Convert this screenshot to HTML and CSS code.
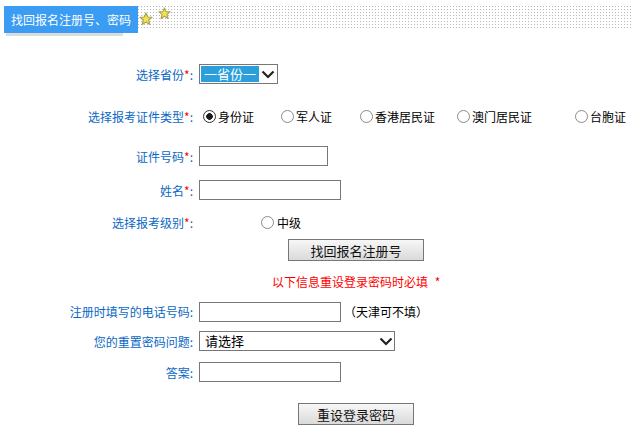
FILE: index.html
```html
<!DOCTYPE html>
<html lang="zh-CN">

<head>
    <meta charset="UTF-8">
    <meta name="viewport" content="width=device-width, initial-scale=1.0">
    <title>找回报名注册号、密码</title>

    <link rel="stylesheet" href="styles.css">
</head>

<body>
    <div class="title_bar">
        <div class="title_wrap">
            <div class="title">找回报名注册号、密码</div>
            <div class="title_shadow"></div>
        </div>
        <div class="dots">
            <svg class="star star1" width="14" height="14" viewBox="0 0 14 14">
                <polygon points="7,1 8.7,5 13,5.3 9.7,8 10.8,12.4 7,10 3.2,12.4 4.3,8 1,5.3 5.3,5" />
            </svg>
            <svg class="star star2" width="13" height="13" viewBox="0 0 14 14">
                <polygon points="7,1 8.7,5 13,5.3 9.7,8 10.8,12.4 7,10 3.2,12.4 4.3,8 1,5.3 5.3,5" />
            </svg>
        </div>
    </div>

    <form class="form">
        <div class="row r1">
            <label class="lbl">选择省份<em>*</em>:</label>
            <div class="field">
                <span class="select province">
                    <select>
                        <option>一省份一</option>
                    </select>
                    <svg class="chev" width="16" height="9" viewBox="0 0 16 9">
                        <polyline points="2.5,1.5 8,7 13.5,1.5" />
                    </svg>
                </span>
            </div>
        </div>

        <div class="row r2">
            <label class="lbl">选择报考证件类型<em>*</em>:</label>
            <div class="field">
                <span class="opt w1"><input type="radio" name="idtype" checked>身份证</span>
                <span class="opt w2"><input type="radio" name="idtype">军人证</span>
                <span class="opt w3"><input type="radio" name="idtype">香港居民证</span>
                <span class="opt w4"><input type="radio" name="idtype">澳门居民证</span>
                <span class="opt"><input type="radio" name="idtype">台胞证</span>
            </div>
        </div>

        <div class="row r3">
            <label class="lbl">证件号码<em>*</em>:</label>
            <div class="field"><input type="text" class="txt short"></div>
        </div>

        <div class="row r4">
            <label class="lbl">姓名<em>*</em>:</label>
            <div class="field"><input type="text" class="txt"></div>
        </div>

        <div class="row r5">
            <label class="lbl">选择报考级别<em>*</em>:</label>
            <div class="field">
                <span class="opt level"><input type="radio" name="level">中级</span>
            </div>
        </div>

        <div class="row r6">
            <span class="lbl"></span>
            <div class="field"><input type="button" class="btn btn_find" value="找回报名注册号"></div>
        </div>

        <div class="row r7">
            <span class="lbl"></span>
            <div class="field"><span class="notice">以下信息重设登录密码时必填 *</span></div>
        </div>

        <div class="row r8">
            <label class="lbl">注册时填写的电话号码:</label>
            <div class="field"><input type="text" class="txt"><span class="tip">（天津可不填）</span></div>
        </div>

        <div class="row r9">
            <label class="lbl">您的重置密码问题:</label>
            <div class="field">
                <span class="select question">
                    <select>
                        <option>请选择</option>
                    </select>
                    <svg class="chev" width="16" height="9" viewBox="0 0 16 9">
                        <polyline points="2.5,1.5 8,7 13.5,1.5" />
                    </svg>
                </span>
            </div>
        </div>

        <div class="row r10">
            <label class="lbl">答案:</label>
            <div class="field"><input type="text" class="txt"></div>
        </div>

        <div class="row r11">
            <span class="lbl"></span>
            <div class="field"><input type="button" class="btn btn_reset" value="重设登录密码"></div>
        </div>
    </form>
</body>

</html>
```

FILE: styles.css
```css
body {
    margin: 0;
    font-family: "Noto Sans CJK SC", "Liberation Sans", sans-serif;
    font-size: 12px;
    color: #000;
    background: #fff;
}

/* title bar */
.title_bar {
    display: flex;
    align-items: flex-start;
    margin: 6px 0 0 4px;
}

.title_wrap {
    flex: none;
    width: 134px;
}

.title {
    height: 27px;
    padding-left: 7px;

    background-color: #3a9cf2;
    color: #fff;
    font-size: 12px;
    line-height: 27px;
    white-space: nowrap;
}

.title_shadow {
    width: 117px;
    height: 3px;
    margin-left: 2px;
    background-color: #dcdcdc;
}

.dots {
    flex: 1;
    height: 22px;
    display: flex;
    align-items: flex-start;

    background-image: linear-gradient(to bottom, transparent 1px, #fff 1px),
        linear-gradient(to right, #b8b8b8 1px, #fff 1px);
    background-size: 3px 3px;
}

.star polygon {
    fill: #f2e44c;
    stroke: #a8a456;
    stroke-width: 1.2;
    stroke-linejoin: round;
}

.star1 {
    margin: 6px 0 0 1px;
}

.star2 {
    margin: 1px 0 0 5px;
}

/* form rows */
.form {
    margin-top: 16px;
}

.row {
    display: grid;
    grid-template-columns: 198px 1fr;
    align-items: center;
}

.r1 { height: 44px; }
.r2 { height: 41px; }
.r3 { height: 38px; }
.r4 { height: 30px; }
.r5 { height: 34px; }
.r6 { height: 22px; }
.r7 { height: 40px; }
.r8 { height: 21px; }
.r9 { height: 38px; }
.r10 { height: 24px; }
.r11 { height: 22px; margin-top: 19px; }

.lbl {
    text-align: right;
    padding-right: 5px;
    color: #0a68c4;
    white-space: nowrap;
}

.lbl em {
    font-style: normal;
    color: #f00;
}

.field {
    display: flex;
    align-items: center;
    white-space: nowrap;
}

/* inputs */
.txt {
    width: 142px;
    height: 20px;
    box-sizing: border-box;
    margin: 0 0 0 1px;
    border: 1px solid #777;
    padding: 0 3px;
    font: inherit;
}

.txt.short {
    width: 129px;
}

.tip {
    margin-left: 3px;
}

.select {
    display: inline-flex;
    align-items: center;
    height: 20px;
    box-sizing: border-box;
    margin-left: 1px;
    border: 1px solid #777;
    background: #fff;
}

.select select {
    appearance: none;
    -webkit-appearance: none;
    border: none;
    outline: none;
    height: 16px;
    padding: 0 3px;
    font: inherit;
    font-size: 13px;
    line-height: 16px;
}

.province {
    width: 79px;
}

.province select {
    width: 58px;
    margin-left: 1px;
    background-color: #2b9fdc;
    color: #fff;
}

.question {
    width: 196px;
}

.question select {
    flex: 1;
    background-color: #fff;
    color: #000;
    padding-left: 5px;
}

.chev {
    margin-left: 1px;
}

.chev polyline {
    fill: none;
    stroke: #222;
    stroke-width: 2.2;
}

/* radios */
.opt {
    display: inline-flex;
    align-items: center;
}

.w1 { width: 78px; }
.w2 { width: 79px; }
.w3 { width: 97px; }
.w4 { width: 118px; }

.opt input {
    appearance: none;
    -webkit-appearance: none;
    width: 13px;
    height: 13px;
    margin: 0 2px 0 5px;
    border: 1px solid #8a8a8a;
    border-radius: 50%;
    background: #fff;
}

.opt input:checked {
    border-color: #333;
    background: radial-gradient(circle, #1a1a1a 0 3px, #fff 3.6px);
}

.level input {
    margin-left: 63px;
    margin-right: 3px;
}

/* buttons */
.btn {
    height: 22px;
    box-sizing: border-box;
    border: 1px solid #777;
    background: linear-gradient(#f7f7f7, #dadada);
    font: inherit;
    font-size: 13px;
    color: #111;
    padding: 0;
}

.btn_find {
    width: 136px;
    margin-left: 90px;
}

.btn_reset {
    width: 116px;
    margin-left: 100px;
}

.notice {
    padding-left: 74px;
    color: #f00;
    word-spacing: 4px;
}
```
